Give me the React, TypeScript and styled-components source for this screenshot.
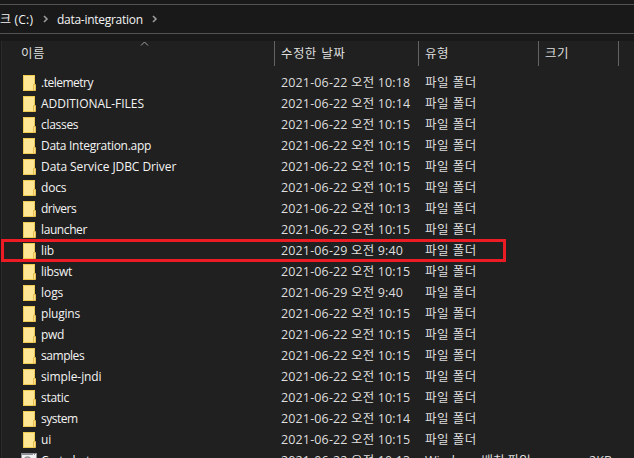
import React from 'react';
import styled, { createGlobalStyle } from 'styled-components';

const GlobalStyle = createGlobalStyle`
  * { box-sizing: border-box; }
  body { margin: 0; background: #202020; overflow: hidden; }
`;

const Window = styled.div`
  width: 634px;
  height: 458px;
  overflow: hidden;
  display: flex;
  flex-direction: column;
  background: #191919;
  color: #f4f4f4;
  font: 12px/21px 'Open Sans', 'Noto Sans CJK KR', sans-serif;
  white-space: pre;
`;

const AddressBar = styled.nav`
  flex: none;
  height: 30px;
  margin: 4px 0 7px;
  border: solid #535353;
  border-width: 1px 0;
  display: flex;
  align-items: center;
`;

const Crumb = styled.span<{ $width: number; $spacing: number }>`
  width: ${(p) => p.$width}px;
  letter-spacing: ${(p) => p.$spacing}px;
  flex: none;
  display: flex;
`;

const Chevron = styled.svg`
  flex: none;
  fill: none;
  stroke: #9b9b9b;
  stroke-width: 1.6;
`;

const FileList = styled.main`
  position: relative;
  flex: 1;
  min-height: 0;
  background: #202020;
  border-left: 1px solid #191919;
  box-shadow: inset 1px 0 #2b2b2b;
`;

const columns = '273px 144px 120px 80px 1fr';

const Header = styled.div`
  display: grid;
  grid-template-columns: ${columns};
  height: 25px;
  margin-bottom: 6px;
  color: #dedede;
  font-size: 12.5px;
`;

const HeaderCell = styled.div<{ $first?: boolean }>`
  border-left: ${(p) => (p.$first ? 0 : '1px solid #636363')};
  padding: 2px 0 0 ${(p) => (p.$first ? 20 : 6)}px;
  letter-spacing: 0.4px;
  word-spacing: 1px;
`;

const SortArrow = styled.svg`
  position: absolute;
  left: 139px;
  top: 0;
  fill: none;
  stroke: #a0a0a0;
`;

const Row = styled.div`
  display: grid;
  grid-template-columns: ${columns};
  height: 21px;
`;

const NameCell = styled.div`
  display: flex;
  align-items: center;
  padding-left: 20px;
`;

const IconSlot = styled.span`
  width: 20px;
  height: 18px;
  flex: none;
  display: flex;
`;

const Label = styled.span<{ $spacing: number }>`
  letter-spacing: ${(p) => p.$spacing}px;
`;

const Cell = styled.div<{ $end?: boolean }>`
  padding: ${(p) => (p.$end ? '0 6px 0 0' : '0 0 0 7px')};
  text-align: ${(p) => (p.$end ? 'right' : 'left')};
  color: #dedede;
  font-size: 12.5px;
`;

const Highlight = styled.div`
  position: absolute;
  left: 0;
  top: 198px;
  width: 505px;
  height: 23px;
  border: 3px solid #ed1c24;
`;

const FolderIcon = () => (
  <svg width="16" height="18" viewBox="0 0 16 18">
    <rect x="2.5" y="1.5" width="11" height="15" fill="#ffe694" stroke="#f0cb52" />
    <path d="M12.5 16.5v-6h2v6z" fill="#ffe18a" stroke="#e5bd50" />
  </svg>
);

const BatchIcon = () => (
  <svg width="16" height="18" viewBox="0 0 16 18">
    <rect x="0.5" y="1.5" width="15" height="15" fill="#f2f2f2" stroke="#8c9097" />
    <path d="M0 2.5h16" stroke="#8c9097" />
    <path d="M12 2.5h1M14 2.5h1" stroke="#fff" />
    <circle cx="6.5" cy="8" r="3" fill="none" stroke="#8c9097" strokeWidth="1.4" />
  </svg>
);

type Entry = [name: string, spacing: number, day: string, time: string];

const folders: Entry[] = [
  ['.telemetry', -0.5, '22', '10:18'],
  ['ADDITIONAL-FILES', -0.03, '22', '10:14'],
  ['classes', -0.3, '22', '10:15'],
  ['Data Integration.app', -0.28, '22', '10:15'],
  ['Data Service JDBC Driver', -0.07, '22', '10:15'],
  ['docs', -0.2, '22', '10:15'],
  ['drivers', -0.5, '22', '10:13'],
  ['launcher', -0.4, '22', '10:15'],
  ['lib', -0.1, '29', '9:40'],
  ['libswt', -0.3, '22', '10:15'],
  ['logs', -0.05, '29', '9:40'],
  ['plugins', -0.2, '22', '10:15'],
  ['pwd', -0.3, '22', '10:15'],
  ['samples', -0.45, '22', '10:15'],
  ['simple-jndi', -0.1, '22', '10:15'],
  ['static', -0.3, '22', '10:15'],
  ['system', -0.5, '22', '10:14'],
  ['ui', 0, '22', '10:15'],
];

const dateSpacing = 0.14;
const typeSpacing = 0.5;

export default function App() {
  return (
    <Window>
      <GlobalStyle />
      <AddressBar>
        <Crumb $width={43} $spacing={0.2}>크 (C:)</Crumb>
        <Chevron width="14" height="8"><path d="M1 1l3 3-3 3" /></Chevron>
        <Crumb $width={95} $spacing={-0.28}>data-integration</Crumb>
        <Chevron width="8" height="8"><path d="M1 1l3 3-3 3" /></Chevron>
      </AddressBar>
      <FileList>
        <Header>
          <HeaderCell $first>이름</HeaderCell>
          <HeaderCell>수정한 날짜</HeaderCell>
          <HeaderCell>유형</HeaderCell>
          <HeaderCell>크기</HeaderCell>
          <HeaderCell />
        </Header>
        <SortArrow width="9" height="5"><path d="M1 4.5l3.5-3.5L8 4.5" /></SortArrow>
        {folders.map(([name, spacing, day, time]) => (
          <Row key={name}>
            <NameCell>
              <IconSlot><FolderIcon /></IconSlot>
              <Label $spacing={spacing}>{name}</Label>
            </NameCell>
            <Cell><Label $spacing={dateSpacing}>{`2021-06-${day} 오전 ${time}`}</Label></Cell>
            <Cell><Label $spacing={typeSpacing}>파일 폴더</Label></Cell>
          </Row>
        ))}
        <Row>
          <NameCell>
            <IconSlot><BatchIcon /></IconSlot>
            <Label $spacing={-0.3}>Carte.bat</Label>
          </NameCell>
          <Cell><Label $spacing={dateSpacing}>2021-06-22 오전 10:13</Label></Cell>
          <Cell><Label $spacing={0}>Windows 배치 파일</Label></Cell>
          <Cell $end>2KB</Cell>
        </Row>
        <Highlight />
      </FileList>
    </Window>
  );
}
